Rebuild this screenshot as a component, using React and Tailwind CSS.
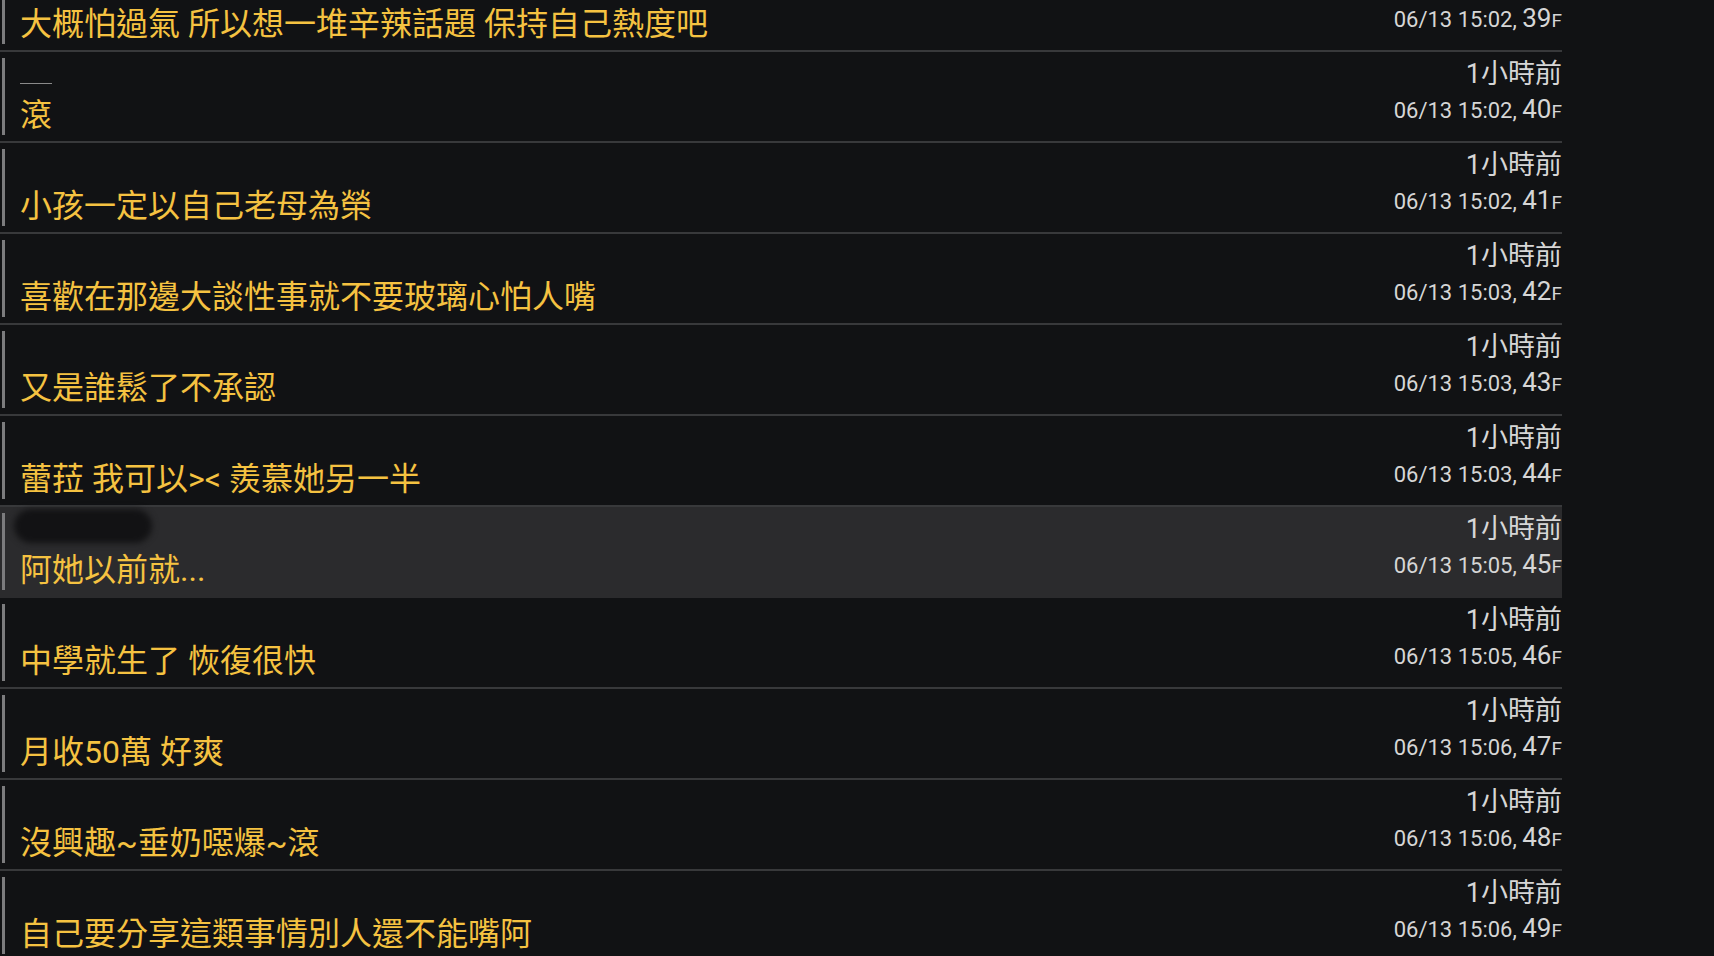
import React from "react";

const FONT = { fontFamily: 'Roboto, "Noto Sans CJK TC", sans-serif' };

const rows = [
  { floor: 39, time: "06/13 15:02", text: "大概怕過氣 所以想一堆辛辣話題 保持自己熱度吧" },
  { floor: 40, time: "06/13 15:02", text: "滾", trace: true },
  { floor: 41, time: "06/13 15:02", text: "小孩一定以自己老母為榮" },
  { floor: 42, time: "06/13 15:03", text: "喜歡在那邊大談性事就不要玻璃心怕人嘴" },
  { floor: 43, time: "06/13 15:03", text: "又是誰鬆了不承認" },
  { floor: 44, time: "06/13 15:03", text: "蕾菈 我可以>< 羨慕她另一半" },
  { floor: 45, time: "06/13 15:05", text: "阿她以前就...", active: true },
  { floor: 46, time: "06/13 15:05", text: "中學就生了 恢復很快" },
  { floor: 47, time: "06/13 15:06", text: "月收50萬 好爽" },
  { floor: 48, time: "06/13 15:06", text: "沒興趣~垂奶噁爆~滾" },
  { floor: 49, time: "06/13 15:06", text: "自己要分享這類事情別人還不能嘴阿" },
];

function PushRow({ row }) {
  return (
    <div
      className={`flex h-[91px] border-b-2 ${
        row.active ? "bg-[#2b2b2d] border-[#2b2b2d]" : "border-[#38393b]"
      }`}
    >
      {/* left marker */}
      <div className="ml-[2px] my-[6px] w-[3px] bg-[#7c7c7e]" />

      {/* user (redacted) + content */}
      <div className="flex-1 pl-[15px] flex flex-col">
        <div className="h-[43px] relative">
          {row.active && (
            <div className="absolute left-[-6px] top-[2px] w-[138px] h-[34px] rounded-full bg-[#121214] blur-[3px]" />
          )}
          {row.trace && <div className="absolute left-0 top-[31px] w-[32px] h-[1px] bg-[#8a8a8a]" />}
        </div>
        <div className="text-[32px] leading-[40px] text-[#f5c241] whitespace-nowrap">{row.text}</div>
      </div>

      {/* time + floor */}
      <div className="flex flex-col items-end pt-[5px] text-[#d6d6d6]">
        <div className="text-[27px] leading-[35px]">1小時前</div>
        <div className="leading-[35px] whitespace-nowrap">
          <span className="text-[22px]">{row.time}, </span>
          <span className="text-[26px]">{row.floor}</span>
          <span className="text-[19px]">F</span>
        </div>
      </div>
    </div>
  );
}

export default function App() {
  return (
    <div className="h-[956px] w-full overflow-hidden bg-[#111214]" style={FONT}>
      <div className="w-[1562px] mt-[-39px]">
        {rows.map((r) => (
          <PushRow key={r.floor} row={r} />
        ))}
      </div>
    </div>
  );
}
